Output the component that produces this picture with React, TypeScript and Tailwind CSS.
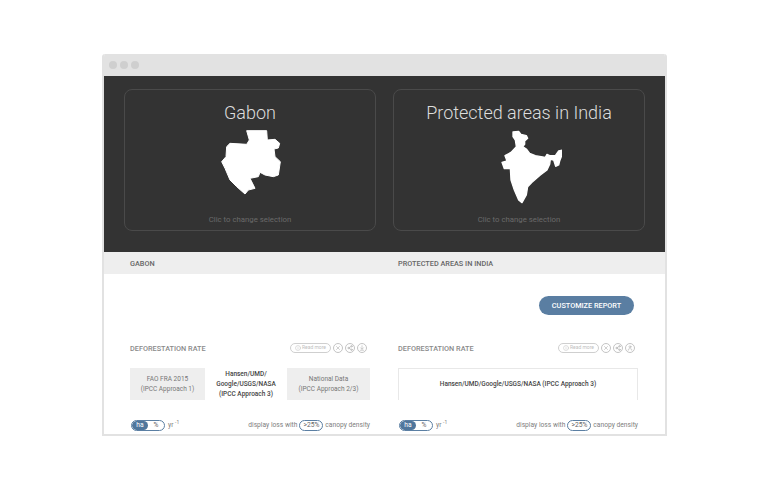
import React from 'react';
import { Info, Share2, X, ArrowDownToLine, User } from 'lucide-react';

const font = { fontFamily: 'Roboto, sans-serif' };

function Gabon() {
  return (
    <svg width="80" height="75" viewBox="0 0 240 225" className="shrink-0" fill="#fff" stroke="#fff" strokeWidth="3" strokeLinejoin="round">
      <path d="M110 17 L170 17 L172 45 L195 43 L209 55 L205 69 L192 72 L195 95 L211 110 L205 150 L190 155 L165 150 L150 142 L145 155 L120 160 L135 190 L115 195 L105 207 L80 185 L60 165 L45 130 L35 110 L48 95 L50 65 L60 55 L110 58 L118 45 Z" />
    </svg>
  );
}

function India() {
  return (
    <svg width="85" height="85" viewBox="-40 0 255 255" className="shrink-0" fill="#fff" stroke="#fff" strokeWidth="4" strokeLinejoin="round">
      <path d="M68 21 L85 19 L92 28 L108 32 L112 40 L103 48 L103 58 L97 65 L108 72 L118 85 L135 92 L165 97 L170 88 L178 92 L195 92 L205 78 L224 73 L225 80 L215 90 L208 108 L205 120 L196 124 L190 105 L180 103 L178 118 L170 135 L150 150 L125 172 L112 185 L108 210 L95 233 L85 225 L72 195 L62 165 L60 130 L42 131 L35 112 L50 108 L44 92 L62 82 L78 65 L75 45 L68 35 Z" />
    </svg>
  );
}

function SelectCard({ title, children }: { title: string; children: React.ReactNode }) {
  return (
    <div className="w-[252px] h-[142px] rounded-lg border border-[#4a4a4a] flex flex-col items-center">
      <div className="mt-[11px] text-[18px] leading-[24px] font-light text-[#dddddd]">{title}</div>
      <div>{children}</div>
      <div className="mt-auto mb-[4px] text-[7.8px] leading-[12px] text-[#6a6a6a]">Clic to change selection</div>
    </div>
  );
}

function ToolCircle({ children }: { children: React.ReactNode }) {
  return (
    <span className="w-[10px] h-[10px] rounded-full border border-[#c4c4c4] flex items-center justify-center text-[#a0a0a0]">
      {children}
    </span>
  );
}

function RateHeader({ last }: { last: React.ReactNode }) {
  return (
    <div className="flex items-center h-[12px]">
      <span className="pt-[2px] text-[7.3px] font-medium text-[#8a8a8a]">DEFORESTATION RATE</span>
      <div className="ml-auto flex items-center gap-[2px] pr-[3px]">
        <span className="w-[41px] h-[10px] rounded-full border border-[#cfcfcf] flex items-center justify-center gap-[1px] text-[5px] text-[#c0c0c0]">
          <Info size={6} />
          Read more
        </span>
        <ToolCircle>
          <X size={6} />
        </ToolCircle>
        <ToolCircle>
          <Share2 size={6} />
        </ToolCircle>
        <ToolCircle>{last}</ToolCircle>
      </div>
    </div>
  );
}

function Controls() {
  return (
    <div className="flex items-center h-[12px] mt-[19px] text-[6.7px] text-[#808080]">
      <div className="ml-[1px] w-[34px] h-[11px] rounded-full border border-[#5b7fa3] flex items-center overflow-hidden">
        <span className="w-[16px] h-full rounded-full bg-[#4f769c] text-white flex items-center justify-center">ha</span>
        <span className="flex-1 text-center text-[#666666]">%</span>
      </div>
      <span className="ml-[3px]">
        yr <sup className="text-[5px]">-1</sup>
      </span>
      <span className="ml-auto">display loss with</span>
      <span className="mx-[2px] px-[3px] h-[11px] rounded-full border border-[#5b7fa3] flex items-center text-[#666666]">&gt;25%</span>
      <span>canopy density</span>
    </div>
  );
}

export default function App() {
  return (
    <div className="w-[768px] h-[491px] bg-white overflow-hidden pt-[54px] pl-[102px]" style={font}>
      <div className="w-[565px] h-[382px] rounded-t-[3px] border-2 border-t-0 border-[#e2e2e2] flex flex-col overflow-hidden">
        {/* title bar */}
        <div className="h-[22px] shrink-0 bg-[#e2e2e2] flex items-center gap-[3px] pl-[5px]">
          <span className="w-[8px] h-[8px] rounded-full bg-[#cfcfcf]" />
          <span className="w-[8px] h-[8px] rounded-full bg-[#cfcfcf]" />
          <span className="w-[8px] h-[8px] rounded-full bg-[#cfcfcf]" />
        </div>

        {/* selection */}
        <div className="h-[176px] shrink-0 bg-[#333333] pt-[13px] pl-[20px] flex gap-[17px]">
          <SelectCard title="Gabon">
            <Gabon />
          </SelectCard>
          <SelectCard title="Protected areas in India">
            <India />
          </SelectCard>
        </div>

        {/* names */}
        <div className="h-[22px] shrink-0 bg-[#eeeeee] pl-[26px] pt-[2px] grid grid-cols-[240px_240px] gap-x-[28px] items-center text-[7.3px] font-medium text-[#666666]">
          <span>GABON</span>
          <span>PROTECTED AREAS IN INDIA</span>
        </div>

        <div className="flex-1 px-[26px] pt-[22px]">
          <div className="flex justify-end pr-[5px]">
            <button className="w-[95px] h-[19px] pt-[2px] rounded-full bg-[#5a7ea2] text-white text-[7.3px] font-medium">CUSTOMIZE REPORT</button>
          </div>

          <div className="grid grid-cols-[240px_240px] gap-x-[28px] mt-[27px]">
            <div>
              <RateHeader last={<ArrowDownToLine size={6} />} />
              <div className="mt-[14px] h-[32px] flex text-[6.5px] leading-[10px] text-center">
                <div className="w-[75px] bg-[#eeeeee] text-[#777777] flex items-center justify-center">
                  FAO FRA 2015
                  <br />
                  (IPCC Approach 1)
                </div>
                <div className="w-[82px] text-[#444444] font-medium flex items-center justify-center">
                  Hansen/UMD/
                  <br />
                  Google/USGS/NASA
                  <br />
                  (IPCC Approach 3)
                </div>
                <div className="flex-1 bg-[#eeeeee] text-[#777777] flex items-center justify-center">
                  National Data
                  <br />
                  (IPCC Approach 2/3)
                </div>
              </div>
              <Controls />
            </div>

            <div>
              <RateHeader last={<User size={6} />} />
              <div className="mt-[14px] h-[32px] border border-b-0 border-[#e8e8e8] flex items-center justify-center text-[6.5px] font-medium text-[#444444]">
                Hansen/UMD/Google/USGS/NASA (IPCC Approach 3)
              </div>
              <Controls />
            </div>
          </div>
        </div>
      </div>
    </div>
  );
}
